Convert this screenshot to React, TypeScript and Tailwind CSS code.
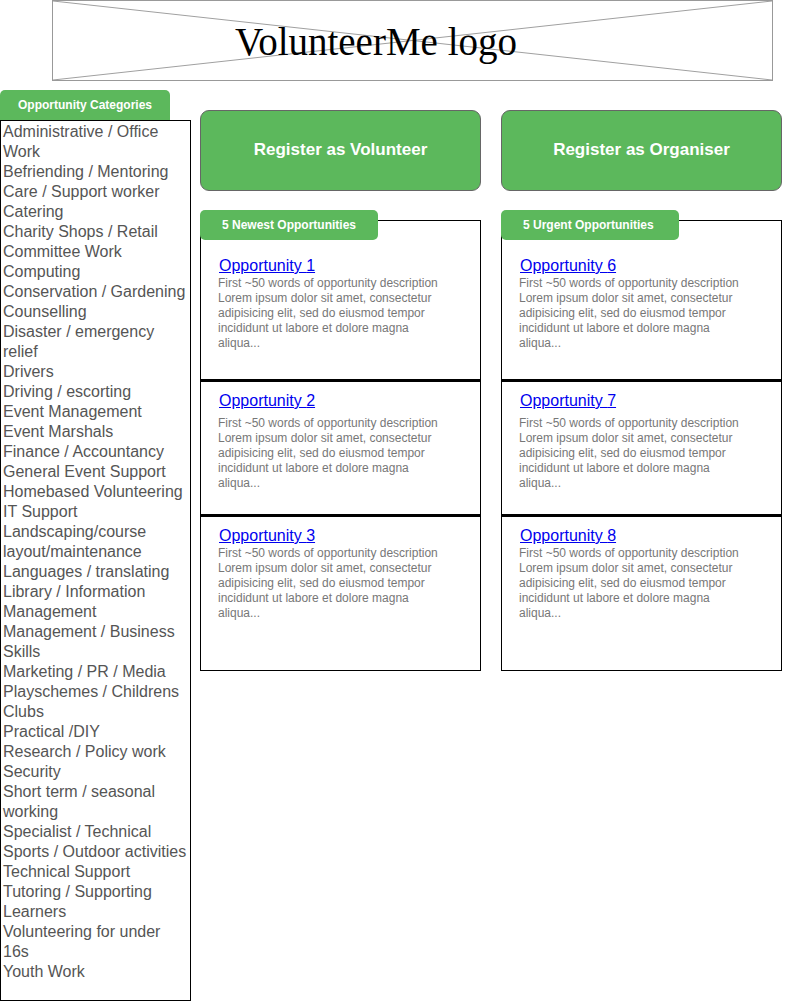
import React from "react";

const categories = [
  "Administrative / Office Work",
  "Befriending / Mentoring",
  "Care / Support worker",
  "Catering",
  "Charity Shops / Retail",
  "Committee Work",
  "Computing",
  "Conservation / Gardening",
  "Counselling",
  "Disaster / emergency relief",
  "Drivers",
  "Driving / escorting",
  "Event Management",
  "Event Marshals",
  "Finance / Accountancy",
  "General Event Support",
  "Homebased Volunteering",
  "IT Support",
  "Landscaping/course layout/maintenance",
  "Languages / translating",
  "Library / Information Management",
  "Management / Business Skills",
  "Marketing / PR / Media",
  "Playschemes / Childrens Clubs",
  "Practical /DIY",
  "Research / Policy work",
  "Security",
  "Short term / seasonal working",
  "Specialist / Technical",
  "Sports / Outdoor activities",
  "Technical Support",
  "Tutoring / Supporting Learners",
  "Volunteering for under 16s",
  "Youth Work",
];

const DESC =
  "First ~50 words of opportunity description Lorem ipsum dolor sit amet, consectetur adipisicing elit, sed do eiusmod tempor incididunt ut labore et dolore magna aliqua...";

function Opp({ n, variant }: { n: number; variant: 0 | 1 | 2 }) {
  const cls =
    variant === 0
      ? "h-[161px] pt-[35px] border-b-[3px] border-black"
      : variant === 1
      ? "h-[135px] pt-[9px] border-b-[3px] border-black"
      : "flex-1 pt-[9px]";
  return (
    <div className={cls + " pl-[18px] pr-[30px]"}>
      <a href="#" className="block text-[16px] leading-[20px] text-[#0000ee] underline">
        Opportunity {n}
      </a>
      <p
        className={
          (variant === 1 ? "mt-[5px] " : "") +
          "text-[12px] leading-[15px] text-[#777777] -ml-px"
        }
      >
        {DESC}
      </p>
    </div>
  );
}

function Column({
  button,
  tab,
  nums,
}: {
  button: string;
  tab: string;
  nums: number[];
}) {
  return (
    <div className="w-[281px] flex flex-col">
      <div className="mt-[20px] h-[81px] w-[281px] rounded-[9px] border border-[#666666] bg-[#5cb85c] flex items-center justify-center pb-[2px] text-white font-bold text-[17px]">
        {button}
      </div>
      <div className="relative mt-[19px]">
        <div className="absolute left-0 top-0 z-10 h-[30px] w-[178px] rounded-[5px] bg-[#5cb85c] pl-[22px] flex items-center text-white font-bold text-[12px]">
          {tab}
        </div>
        <div className="mt-[10px] h-[451px] border border-black flex flex-col bg-white">
          <Opp n={nums[0]} variant={0} />
          <Opp n={nums[1]} variant={1} />
          <Opp n={nums[2]} variant={2} />
        </div>
      </div>
    </div>
  );
}

export default function App() {
  return (
    <div className="w-[785px] h-[1004px] bg-white overflow-hidden font-['Liberation_Sans',Arial,sans-serif]">
      <div className="relative ml-[52px] w-[721px] h-[81px] border border-[#999999]">
        <svg
          className="absolute inset-0 w-full h-full"
          viewBox="0 0 719 79"
          preserveAspectRatio="none"
        >
          <line x1="0" y1="0" x2="719" y2="79" stroke="#a0a0a0" strokeWidth="1" />
          <line x1="719" y1="0" x2="0" y2="79" stroke="#a0a0a0" strokeWidth="1" />
        </svg>
        <div className="relative pl-[182px] pt-[19px] font-['Liberation_Serif',serif] text-[39px] leading-[44px] text-black">
          VolunteerMe logo
        </div>
      </div>
      <div className="flex mt-[9px]">
        <div className="w-[191px] flex flex-col">
          <div className="h-[30px] w-[170px] rounded-t-[5px] bg-[#5cb85c] flex items-center justify-center text-white font-bold text-[12px]">
            Opportunity Categories
          </div>
          <div className="h-[881px] border border-black pt-[1px] pl-[2px] pr-[2px] text-[16px] leading-[20px] text-[#555555]">
            {categories.map((c) => (
              <div key={c}>{c}</div>
            ))}
          </div>
        </div>
        <div className="ml-[9px] flex gap-[20px]">
          <Column
            button="Register as Volunteer"
            tab="5 Newest Opportunities"
            nums={[1, 2, 3]}
          />
          <Column
            button="Register as Organiser"
            tab="5 Urgent Opportunities"
            nums={[6, 7, 8]}
          />
        </div>
      </div>
    </div>
  );
}
